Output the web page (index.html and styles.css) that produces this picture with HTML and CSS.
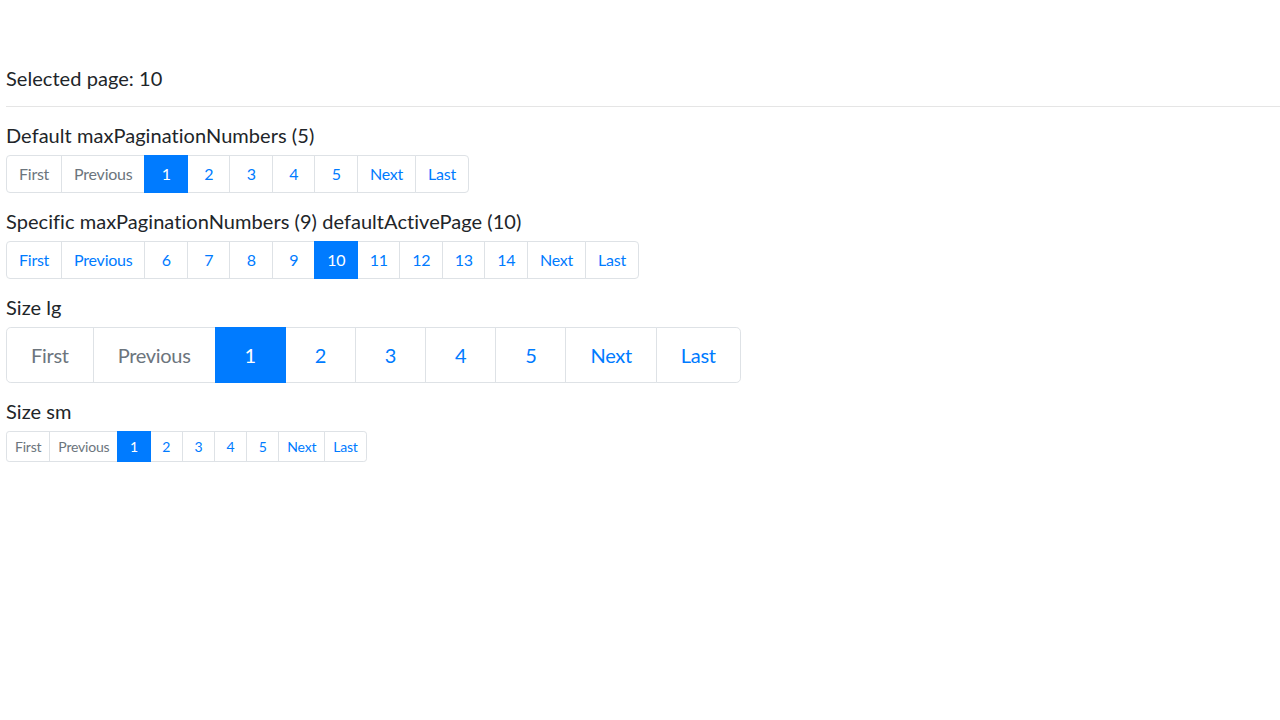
FILE: index.html
```html
<!DOCTYPE html>
<html>
	<head>
		<meta charset="utf-8">
		<title>Pagination</title>
		<link rel="stylesheet" href="styles.css">
	</head>
	<body>
		<div id="app">
			<h5 class="title">Selected page: 10</h5>
			<hr>

			<h5 class="title">Default maxPaginationNumbers (5)</h5>
			<ul class="pagination">
				<li class="page-item disabled"><a class="page-link">First</a></li>
				<li class="page-item disabled"><a class="page-link">Previous</a></li>
				<li class="page-item num active"><a class="page-link">1</a></li>
				<li class="page-item num"><a class="page-link">2</a></li>
				<li class="page-item num"><a class="page-link">3</a></li>
				<li class="page-item num"><a class="page-link">4</a></li>
				<li class="page-item num"><a class="page-link">5</a></li>
				<li class="page-item"><a class="page-link">Next</a></li>
				<li class="page-item"><a class="page-link">Last</a></li>
			</ul>

			<h5 class="title">Specific maxPaginationNumbers (9) defaultActivePage (10)</h5>
			<ul class="pagination">
				<li class="page-item"><a class="page-link">First</a></li>
				<li class="page-item"><a class="page-link">Previous</a></li>
				<li class="page-item num"><a class="page-link">6</a></li>
				<li class="page-item num"><a class="page-link">7</a></li>
				<li class="page-item num"><a class="page-link">8</a></li>
				<li class="page-item num"><a class="page-link">9</a></li>
				<li class="page-item num active"><a class="page-link">10</a></li>
				<li class="page-item num"><a class="page-link">11</a></li>
				<li class="page-item num"><a class="page-link">12</a></li>
				<li class="page-item num"><a class="page-link">13</a></li>
				<li class="page-item num"><a class="page-link">14</a></li>
				<li class="page-item"><a class="page-link">Next</a></li>
				<li class="page-item"><a class="page-link">Last</a></li>
			</ul>

			<h5 class="title">Size lg</h5>
			<ul class="pagination pagination-lg">
				<li class="page-item disabled"><a class="page-link">First</a></li>
				<li class="page-item disabled"><a class="page-link">Previous</a></li>
				<li class="page-item num active"><a class="page-link">1</a></li>
				<li class="page-item num"><a class="page-link">2</a></li>
				<li class="page-item num"><a class="page-link">3</a></li>
				<li class="page-item num"><a class="page-link">4</a></li>
				<li class="page-item num"><a class="page-link">5</a></li>
				<li class="page-item"><a class="page-link">Next</a></li>
				<li class="page-item"><a class="page-link">Last</a></li>
			</ul>

			<h5 class="title">Size sm</h5>
			<ul class="pagination pagination-sm">
				<li class="page-item disabled"><a class="page-link">First</a></li>
				<li class="page-item disabled"><a class="page-link">Previous</a></li>
				<li class="page-item num active"><a class="page-link">1</a></li>
				<li class="page-item num"><a class="page-link">2</a></li>
				<li class="page-item num"><a class="page-link">3</a></li>
				<li class="page-item num"><a class="page-link">4</a></li>
				<li class="page-item num"><a class="page-link">5</a></li>
				<li class="page-item"><a class="page-link">Next</a></li>
				<li class="page-item"><a class="page-link">Last</a></li>
			</ul>
		</div>
	</body>
</html>
```

FILE: styles.css
```css
body {
	margin: 0;
	font-family: Lato, "Liberation Sans", sans-serif;
	font-size: 16px;
	line-height: 1.5;
	color: #212529;
	background: #fff;
}

#app {
	padding: 66px 0 0 6px;
}

.title {
	margin: 0 0 8px 0;
	font-size: 20px;
	font-weight: 400;
	line-height: 1.2;
	letter-spacing: 0.05px;
}

hr {
	margin: 16px 0;
	border: 0;
	border-top: 1px solid rgba(0, 0, 0, 0.1);
}

.pagination {
	display: flex;
	padding: 0;
	margin: 0 0 16px 0;
	list-style: none;
}

.page-link {
	position: relative;
	display: block;
	padding: 8px 12px;
	margin-left: -1px;
	line-height: 1.25;
	letter-spacing: -0.015em;
	color: #007bff;
	background-color: #fff;
	border: 1px solid #dee2e6;
	cursor: pointer;
	text-align: center;
}

.num .page-link {
	width: 43.5px;
	padding-left: 0;
	padding-right: 0;
	box-sizing: border-box;
}

.page-item:first-child .page-link {
	margin-left: 0;
	border-top-left-radius: 4px;
	border-bottom-left-radius: 4px;
}

.page-item:last-child .page-link {
	border-top-right-radius: 4px;
	border-bottom-right-radius: 4px;
}

.page-item.active .page-link {
	z-index: 1;
	color: #fff;
	background-color: #007bff;
	border-color: #007bff;
}

.page-item.disabled .page-link {
	color: #6c757d;
	cursor: auto;
}

.pagination-lg .page-link {
	padding: 12px 24px;
	font-size: 20px;
	line-height: 1.5;
}

.pagination-lg .num .page-link {
	width: 71.2px;
}

.pagination-lg .page-item:first-child .page-link {
	border-top-left-radius: 4.8px;
	border-bottom-left-radius: 4.8px;
}

.pagination-lg .page-item:last-child .page-link {
	border-top-right-radius: 4.8px;
	border-bottom-right-radius: 4.8px;
}

.pagination-sm .page-link {
	padding: 4px 8px;
	font-size: 14px;
	line-height: 1.5;
}

.pagination-sm .num .page-link {
	width: 33.2px;
}

.pagination-sm .page-item:first-child .page-link {
	border-top-left-radius: 3.2px;
	border-bottom-left-radius: 3.2px;
}

.pagination-sm .page-item:last-child .page-link {
	border-top-right-radius: 3.2px;
	border-bottom-right-radius: 3.2px;
}
```
